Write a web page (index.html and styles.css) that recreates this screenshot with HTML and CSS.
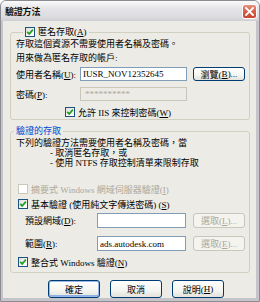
FILE: index.html
```html
<!DOCTYPE html>
<html>
<head>
<meta charset="utf-8">
<title>驗證方法</title>
<link rel="stylesheet" href="styles.css">
</head>
<body>
<div class="window">
    <div class="titlebar">
        <span class="title">驗證方法</span>
        <span class="close-btn">
            <svg width="9" height="9" viewBox="0 0 9 9"><path d="M1 1 L8 8 M8 1 L1 8" stroke="#fff" stroke-width="1.8" stroke-linecap="square"/></svg>
        </span>
    </div>
    <div class="dialog-body">

        <!-- Anonymous access -->
        <fieldset class="group group-anon">
            <legend class="legend legend-anon">
                <span class="chk"><svg width="8" height="8" viewBox="0 0 8 8"><path d="M1.2 3.8 L3.2 5.9 L6.9 1.6" fill="none" stroke="#21a121" stroke-width="1.7"/></svg></span>
                <span>匿名存取(<u>A</u>)</span>
            </legend>
            <div class="line line-first">存取這個資源不需要使用者名稱及密碼。</div>
            <div class="line line-second">用來做為匿名存取的帳戶:</div>
            <div class="field-row row-user">
                <span class="lbl lbl-anon">使用者名稱(<u>U</u>):</span>
                <div class="textbox tb-anon">IUSR_NOV12352645</div>
                <span class="btn">瀏覽(<u>B</u>)...</span>
            </div>
            <div class="field-row row-pwd">
                <span class="lbl lbl-anon">密碼(<u>P</u>):</span>
                <div class="textbox tb-anon tb-disabled">**********</div>
            </div>
            <div class="chk-row row-iis">
                <span class="chk"><svg width="8" height="8" viewBox="0 0 8 8"><path d="M1.2 3.8 L3.2 5.9 L6.9 1.6" fill="none" stroke="#21a121" stroke-width="1.7"/></svg></span>
                <span>允許 IIS 來控制密碼(<u>W</u>)</span>
            </div>
        </fieldset>

        <!-- Authenticated access -->
        <fieldset class="group group-auth">
            <legend class="legend legend-auth">驗證的存取</legend>
            <div class="small-line line-auth">下列的驗證方法需要使用者名稱及密碼，當</div>
            <div class="small-line indent">- 取消匿名存取，或</div>
            <div class="small-line indent">- 使用 NTFS 存取控制清單來限制存取</div>
            <div class="chk-row row-digest disabled">
                <span class="chk chk-disabled"></span>
                <span>摘要式 Windows 網域伺服器驗證(<u>I</u>)</span>
            </div>
            <div class="chk-row row-basic">
                <span class="chk"><svg width="8" height="8" viewBox="0 0 8 8"><path d="M1.2 3.8 L3.2 5.9 L6.9 1.6" fill="none" stroke="#21a121" stroke-width="1.7"/></svg></span>
                <span>基本驗證 (使用純文字傳送密碼) (<u>S</u>)</span>
            </div>
            <div class="field-row row-domain">
                <span class="lbl lbl-auth">預設網域(<u>D</u>):</span>
                <div class="textbox tb-auth"></div>
                <span class="btn btn-disabled">選取(<u>L</u>)...</span>
            </div>
            <div class="field-row row-realm">
                <span class="lbl lbl-auth">範圍(<u>R</u>):</span>
                <div class="textbox tb-auth">ads.autodesk.com</div>
                <span class="btn btn-disabled">選取(<u>E</u>)...</span>
            </div>
            <div class="chk-row row-integrated">
                <span class="chk"><svg width="8" height="8" viewBox="0 0 8 8"><path d="M1.2 3.8 L3.2 5.9 L6.9 1.6" fill="none" stroke="#21a121" stroke-width="1.7"/></svg></span>
                <span>整合式 Windows 驗證(<u>N</u>)</span>
            </div>
        </fieldset>

        <!-- Dialog buttons -->
        <div class="button-bar">
            <span class="btn btn-main btn-default">確定</span>
            <span class="btn btn-main">取消</span>
            <span class="btn btn-main">說明(<u>H</u>)</span>
        </div>
    </div>
</div>
</body>
</html>
```

FILE: styles.css
```css
html, body {
    margin: 0;
    padding: 0;
    background: #ffffff;
}
body {
    font-family: "Liberation Serif", "Noto Sans CJK TC", serif;
    font-size: 9px;
    color: #000000;
}
u {
    text-decoration: underline;
}
.window {
    width: 260px;
    height: 302px;
    box-sizing: border-box;
    border: 1px solid #8c8d93;
    border-radius: 6px 6px 0 0;
    background: #c4c4ca;
    display: flex;
    flex-direction: column;
    overflow: hidden;
}
.titlebar {
    height: 20px;
    flex: none;
    display: flex;
    align-items: center;
    justify-content: space-between;
    padding: 0 2px 0 4px;
    background: linear-gradient(to bottom, #fbfbfc 0%, #e6e6e9 35%, #dcdce0 80%, #cfcfd4 100%);
}
.title {
    font-weight: bold;
    font-size: 9px;
    color: #111111;
    letter-spacing: -0.2px;
}
.close-btn {
    width: 15px;
    height: 15px;
    box-sizing: border-box;
    border: 1px solid #ffffff;
    border-radius: 3px;
    background: linear-gradient(to bottom, #e9907f 0%, #d85e49 50%, #c9452f 100%);
    display: flex;
    align-items: center;
    justify-content: center;
    margin-top: 1px;
}
.dialog-body {
    flex: 1;
    background: #ecebe5;
    border-style: solid;
    border-color: #c4c4ca;
    border-width: 0 3px 3px 2px;
    padding: 5px 6px 0 7px;
}
.group {
    margin: 0;
    padding: 0 4px 0 5px;
    border: 1px solid #d0d0bf;
    border-radius: 3px;
    min-width: 0;
}
.group-auth {
    margin-top: 5px;
    padding-bottom: 3px;
}
.legend {
    height: 12px;
    line-height: 12px;
    padding: 0 2px;
    display: flex;
    align-items: center;
    gap: 3px;
}
.legend-anon {
    margin-left: 7px;
}
.legend-auth {
    margin-left: -2px;
    color: #0046d5;
}
.line {
    line-height: 12px;
    height: 12px;
    white-space: nowrap;
}
.line-second {
    margin-top: 2px;
}
.small-line {
    line-height: 10px;
    height: 10px;
    white-space: nowrap;
}
.line-auth {
    margin-top: 1px;
}
.indent {
    padding-left: 34px;
}
.field-row {
    display: flex;
    align-items: center;
    height: 14px;
}
.row-user {
    margin-top: 3px;
}
.row-pwd {
    margin-top: 6px;
}
.row-domain {
    margin-top: 2px;
    height: 15px;
}
.row-realm {
    margin-top: 8px;
    height: 15px;
}
.lbl {
    flex: none;
    white-space: nowrap;
}
.lbl-anon {
    width: 64px;
}
.lbl-auth {
    width: 72px;
    margin-left: 9px;
}
.textbox {
    height: 100%;
    box-sizing: border-box;
    border: 1px solid #7f9db9;
    background: #ffffff;
    padding: 0 2px;
    display: flex;
    align-items: center;
    white-space: nowrap;
    overflow: hidden;
}
.tb-anon {
    width: 107px;
    margin-right: 6px;
}
.tb-auth {
    width: 89px;
    margin-right: 7px;
}
.tb-disabled {
    background: #ecebe5;
    border-color: #c9c7ba;
    color: #aca899;
    padding-left: 4px;
}
.btn {
    flex: none;
    width: 52px;
    height: 100%;
    box-sizing: border-box;
    border: 1px solid #003c74;
    border-radius: 3px;
    background: linear-gradient(to bottom, #ffffff 0%, #f4f4f0 60%, #e3e2dc 100%);
    display: flex;
    align-items: center;
    justify-content: center;
    white-space: nowrap;
}
.btn-disabled {
    border-color: #c9c7ba;
    background: #f4f3ee;
    color: #aca899;
}
.chk-row {
    display: flex;
    align-items: center;
    gap: 3px;
    height: 14px;
    white-space: nowrap;
}
.row-iis {
    margin-top: 4px;
    padding-left: 49px;
}
.row-digest {
    margin-top: 14px;
    padding-left: 2px;
}
.row-basic {
    margin-top: 1px;
    padding-left: 2px;
}
.row-integrated {
    margin-top: 4px;
    padding-left: 2px;
}
.disabled {
    color: #aca899;
}
.chk {
    flex: none;
    width: 10px;
    height: 10px;
    box-sizing: border-box;
    border: 1px solid #1c5180;
    background: linear-gradient(135deg, #dcdcd7 0%, #ffffff 80%);
    display: flex;
    align-items: center;
    justify-content: center;
}
.chk-disabled {
    border-color: #cac8bb;
    background: #ffffff;
}
.button-bar {
    display: flex;
    justify-content: flex-end;
    gap: 10px;
    margin-top: 7px;
    margin-right: 26px;
    height: 18px;
}
.btn-main {
    height: 18px;
}
.btn-default {
    box-shadow: inset 0 0 0 1px #98b8ea, inset 0 -1px 0 1px #8fb0e6;
}
```
